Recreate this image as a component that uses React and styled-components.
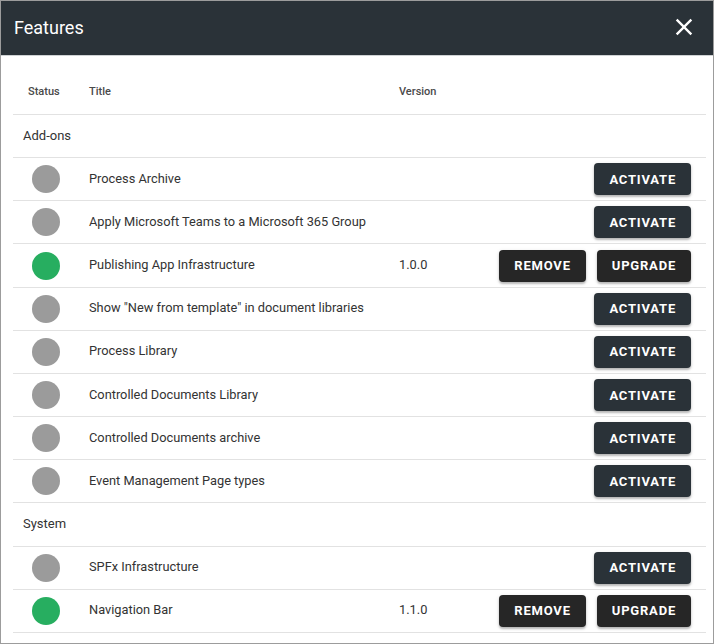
import React from "react";
import styled, { createGlobalStyle } from "styled-components";

const Global = createGlobalStyle`
  html, body { margin: 0; padding: 0; background: #fff; }
  body { font-family: Roboto, "Liberation Sans", Arial, sans-serif; }
  * { box-sizing: border-box; }
`;

const Frame = styled.div`
  width: 714px;
  height: 644px;
  border: 1px solid #9c9c9c;
  display: flex;
  flex-direction: column;
  overflow: hidden;
`;

const Header = styled.div`
  height: 55px;
  flex: none;
  background: #2a3238;
  border-bottom: 1px solid #cfd2d4;
  display: flex;
  align-items: center;
  justify-content: space-between;
  padding: 0 15px 2px 13px;
`;

const Heading = styled.h1`
  margin: 0;
  font-size: 18px;
  font-weight: 400;
  color: #fff;
`;

const CloseButton = styled.button`
  border: 0;
  background: none;
  padding: 0;
  width: 28px;
  height: 28px;
  display: flex;
  color: #fff;
  cursor: pointer;
`;

const Body = styled.div`
  flex: 1;
  padding: 14px 7px 0 12px;
`;

const Grid = styled.div`
  display: grid;
  grid-template-columns: 76px 310px 1fr auto;
`;

const HeadCell = styled.div`
  height: 45px;
  display: flex;
  align-items: center;
  font-size: 11px;
  font-weight: 500;
  color: #4a4a4a;
  border-bottom: 1px solid #e2e2e2;
  padding-left: ${(p) => p.$pl || 0}px;
  padding-bottom: 1px;
`;

const GroupCell = styled.div`
  grid-column: 1 / -1;
  height: 43.17px;
  display: flex;
  align-items: center;
  padding-left: 10px;
  padding-bottom: 2px;
  font-size: 13px;
  color: #333;
  border-bottom: 1px solid #e2e2e2;
`;

const Cell = styled.div`
  height: 43.17px;
  display: flex;
  align-items: center;
  font-size: 12.8px;
  color: #333;
  border-bottom: 1px solid #e2e2e2;
  justify-content: ${(p) => (p.$end ? "flex-end" : "flex-start")};
  padding-left: ${(p) => p.$pl || 0}px;
  padding-right: ${(p) => p.$pr || 0}px;
  padding-bottom: ${(p) => (p.$end ? 0 : 2)}px;
  gap: 11px;
`;

const Dot = styled.span`
  width: 28px;
  height: 28px;
  border-radius: 50%;
  margin-top: 2px;
  background: ${(p) => (p.$active ? "#27ae60" : "#9b9b9b")};
`;

const ActionButton = styled.button`
  height: 32px;
  border: 0;
  border-radius: 4px;
  padding: 0 15px;
  background: ${(p) => (p.$variant === "activate" ? "#2a3238" : "#262626")};
  color: #fff;
  font-family: Roboto, "Liberation Sans", Arial, sans-serif;
  font-size: 13px;
  font-weight: 700;
  letter-spacing: 0.8px;
  text-transform: uppercase;
  box-shadow: 0 2px 2px rgba(0, 0, 0, 0.22), 0 1px 4px rgba(0, 0, 0, 0.12);
  cursor: pointer;
`;

const groups = [
  {
    name: "Add-ons",
    items: [
      { title: "Process Archive" },
      { title: "Apply Microsoft Teams to a Microsoft 365 Group" },
      { title: "Publishing App Infrastructure", version: "1.0.0", active: true },
      { title: 'Show "New from template" in document libraries' },
      { title: "Process Library" },
      { title: "Controlled Documents Library" },
      { title: "Controlled Documents archive" },
      { title: "Event Management Page types" },
    ],
  },
  {
    name: "System",
    items: [
      { title: "SPFx Infrastructure" },
      { title: "Navigation Bar", version: "1.1.0", active: true },
    ],
  },
];

export default function App() {
  return (
    <>
      <Global />
      <Frame>
        <Header>
          <Heading>Features</Heading>
          <CloseButton aria-label="Close">
            <svg width="28" height="28" viewBox="0 0 24 24" fill="currentColor">
              <path d="M19 6.41L17.59 5 12 10.59 6.41 5 5 6.41 10.59 12 5 17.59 6.41 19 12 13.41 17.59 19 19 17.59 13.41 12z" />
            </svg>
          </CloseButton>
        </Header>
        <Body>
          <Grid>
            <HeadCell $pl={15}>Status</HeadCell>
            <HeadCell>Title</HeadCell>
            <HeadCell>Version</HeadCell>
            <HeadCell />
            {groups.map((g) => (
              <React.Fragment key={g.name}>
                <GroupCell>{g.name}</GroupCell>
                {g.items.map((it) => (
                  <React.Fragment key={it.title}>
                    <Cell $pl={19}>
                      <Dot $active={it.active} />
                    </Cell>
                    <Cell>{it.title}</Cell>
                    <Cell>{it.version || ""}</Cell>
                    <Cell $end $pr={15}>
                      {it.active ? (
                        <>
                          <ActionButton $variant="remove">Remove</ActionButton>
                          <ActionButton $variant="upgrade">Upgrade</ActionButton>
                        </>
                      ) : (
                        <ActionButton $variant="activate">Activate</ActionButton>
                      )}
                    </Cell>
                  </React.Fragment>
                ))}
              </React.Fragment>
            ))}
          </Grid>
        </Body>
      </Frame>
    </>
  );
}
